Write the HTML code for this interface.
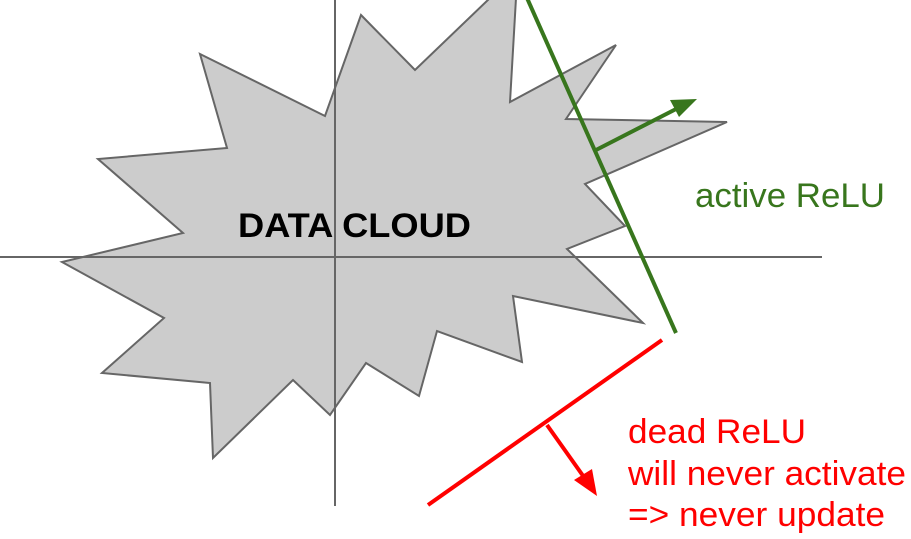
<!DOCTYPE html>
<html><head><meta charset="utf-8"><style>
html,body{margin:0;padding:0;background:#fff;width:911px;height:539px;overflow:hidden}
svg{display:block}
text{font-family:"Liberation Sans",Arial,sans-serif}
</style></head><body>
<svg width="911" height="539" viewBox="0 0 911 539" xmlns="http://www.w3.org/2000/svg">
<polygon points="361,15 415,70 490,-2 516,-2 510,102 616,45 566,119 727,122 585,184 625,226 567,249 643,323 513,296 522,362 437,331 419,396 366,363 330,415 293,380 213,458 210,383 102,373 164,318 62,262 183,233 98,159 227,148 200,54 325,116" fill="#cccccc" stroke="#666" stroke-width="2" stroke-linejoin="miter"/>
<line x1="335" y1="0" x2="335" y2="506" stroke="#666" stroke-width="2"/>
<line x1="0" y1="257" x2="822" y2="257" stroke="#666" stroke-width="2"/>
<text x="238" y="237" font-size="34" font-weight="bold" fill="#000" textLength="233" lengthAdjust="spacingAndGlyphs">DATA CLOUD</text>
<line x1="527" y1="-2" x2="676" y2="333" stroke="#38761d" stroke-width="4"/>
<line x1="596" y1="150" x2="680" y2="107" stroke="#38761d" stroke-width="4"/>
<polygon points="697,99 670,100 679,117" fill="#38761d"/>
<text x="695" y="207" font-size="34" fill="#38761d" textLength="190" lengthAdjust="spacingAndGlyphs">active ReLU</text>
<line x1="428" y1="505" x2="662" y2="340" stroke="#ff0000" stroke-width="4"/>
<line x1="547" y1="425" x2="586" y2="480" stroke="#ff0000" stroke-width="4"/>
<polygon points="597,496 574,480 592,469" fill="#ff0000"/>
<text x="628" y="443" font-size="34" fill="#ff0000" textLength="178" lengthAdjust="spacingAndGlyphs">dead ReLU</text>
<text x="628" y="485" font-size="34" fill="#ff0000" textLength="278" lengthAdjust="spacingAndGlyphs">will never activate</text>
<text x="628" y="526" font-size="34" fill="#ff0000" textLength="257" lengthAdjust="spacingAndGlyphs">=&gt; never update</text>
</svg>
</body></html>
